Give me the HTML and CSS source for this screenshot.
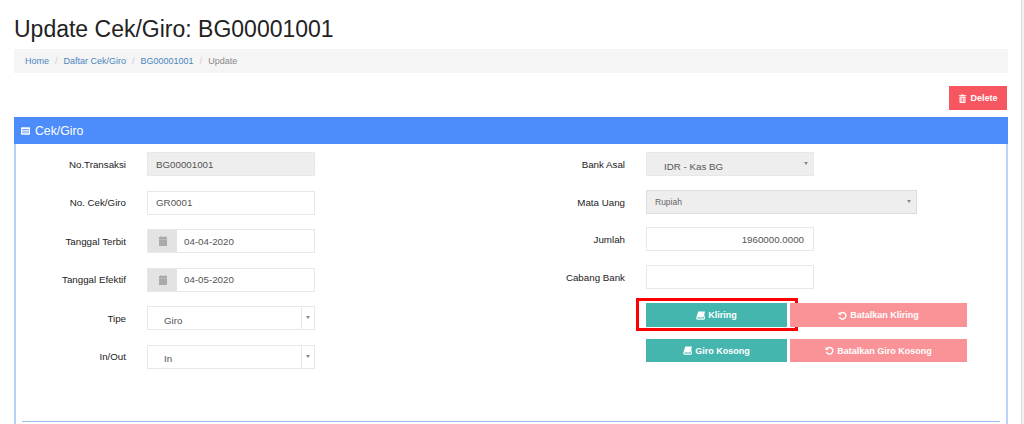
FILE: index.html
```html
<!DOCTYPE html>
<html lang="en">
<head>
    <meta charset="UTF-8">
    <title>Update Cek/Giro</title>
    <link rel="stylesheet" href="styles.css">
</head>
<body>
    <div class="page">
        <h1 class="title">Update Cek/Giro: BG00001001</h1>
        <ul class="breadcrumb">
            <li><a href="#">Home</a></li>
            <li class="sep">/</li>
            <li><a href="#">Daftar Cek/Giro</a></li>
            <li class="sep">/</li>
            <li><a href="#">BG00001001</a></li>
            <li class="sep">/</li>
            <li class="current">Update</li>
        </ul>
        <div class="actions">
            <button class="btn btn-delete">
                <svg class="icon" viewBox="0 0 12 12"><path fill="currentColor" d="M4 1.5 4.6.5h2.8L8 1.5h3v1H1v-1zM2 3.2h8V11a1 1 0 0 1-1 1H3a1 1 0 0 1-1-1zM3.6 4.5v6h.9v-6zm2 0v6h.9v-6zm2 0v6h.9v-6z"/></svg>
                Delete
            </button>
        </div>
        <div class="panel">
            <div class="panel-heading">
                <svg class="icon icon-head" viewBox="0 0 12 10"><path fill="currentColor" d="M1 0h10a1 1 0 0 1 1 1v8a1 1 0 0 1-1 1H1a1 1 0 0 1-1-1V1a1 1 0 0 1 1-1zm.3 2.5v1h9.4v-1zm0 2.2v1h9.4v-1zm0 2.2v1h9.4v-1z"/></svg>
                Cek/Giro
            </div>
            <div class="panel-body">
                <div class="form-col form-left">
                    <div class="row">
                        <label>No.Transaksi</label>
                        <div class="input disabled">BG00001001</div>
                    </div>
                    <div class="row">
                        <label>No. Cek/Giro</label>
                        <div class="input">GR0001</div>
                    </div>
                    <div class="row">
                        <label>Tanggal Terbit</label>
                        <div class="input date">
                            <span class="addon"><svg class="icon-cal" viewBox="0 0 10 10"><path fill="currentColor" d="M1 1h1.5V0h1v1h3V0h1v1H9v9H1z"/><path fill="#c9c9c9" d="M1 3h8v.6H1z"/></svg></span>
                            <span class="date-val">04-04-2020</span>
                        </div>
                    </div>
                    <div class="row">
                        <label>Tanggal Efektif</label>
                        <div class="input date">
                            <span class="addon"><svg class="icon-cal" viewBox="0 0 10 10"><path fill="currentColor" d="M1 1h1.5V0h1v1h3V0h1v1H9v9H1z"/><path fill="#c9c9c9" d="M1 3h8v.6H1z"/></svg></span>
                            <span class="date-val">04-05-2020</span>
                        </div>
                    </div>
                    <div class="row">
                        <label>Tipe</label>
                        <div class="input select2 split">Giro<span class="arrow-box"><i class="caret"></i></span></div>
                    </div>
                    <div class="row">
                        <label>In/Out</label>
                        <div class="input select2 split">In<span class="arrow-box"><i class="caret"></i></span></div>
                    </div>
                </div>
                <div class="form-col form-right">
                    <div class="row">
                        <label>Bank Asal</label>
                        <div class="input select2 disabled">IDR - Kas BG<i class="caret"></i></div>
                    </div>
                    <div class="row">
                        <label>Mata Uang</label>
                        <div class="input wide disabled small">Rupiah<i class="caret"></i></div>
                    </div>
                    <div class="row row-tight">
                        <label>Jumlah</label>
                        <div class="input number">1960000.0000</div>
                    </div>
                    <div class="row">
                        <label>Cabang Bank</label>
                        <div class="input"></div>
                    </div>
                    <div class="btn-row">
                        <button class="btn btn-green btn-one">
                            <svg class="icon" viewBox="0 0 12 11"><path fill="currentColor" d="M3 0h9l-2 8H2.2c-.9 0-.9 1.6 0 1.6h8.2L12 3.5V9l-1 2H2C.6 11 0 10 .3 8.5z"/></svg>
                            Kliring
                            <span class="highlight"></span>
                        </button>
                        <button class="btn btn-pink btn-two">
                            <svg class="icon" viewBox="0 0 12 12"><path fill="none" stroke="currentColor" stroke-width="1.8" d="M3 3.2A4.4 4.4 0 1 1 2 8"/><path fill="currentColor" d="M.6 1v4.4H5z"/></svg>
                            Batalkan Kliring
                        </button>
                    </div>
                    <div class="btn-row btn-row-last">
                        <button class="btn btn-green btn-one">
                            <svg class="icon" viewBox="0 0 12 11"><path fill="currentColor" d="M3 0h9l-2 8H2.2c-.9 0-.9 1.6 0 1.6h8.2L12 3.5V9l-1 2H2C.6 11 0 10 .3 8.5z"/></svg>
                            Giro Kosong
                        </button>
                        <button class="btn btn-pink btn-two">
                            <svg class="icon" viewBox="0 0 12 12"><path fill="none" stroke="currentColor" stroke-width="1.8" d="M3 3.2A4.4 4.4 0 1 1 2 8"/><path fill="currentColor" d="M.6 1v4.4H5z"/></svg>
                            Batalkan Giro Kosong
                        </button>
                    </div>
                </div>
            </div>
            <hr class="divider">
        </div>
    </div>
    <div class="scrollbar"></div>
</body>
</html>
```
FILE: styles.css
```css
html, body {
    height: 424px;
    overflow: hidden;
}
body {
    display: flex;
    justify-content: space-between;
    margin: 0;
    background: #fff;
    font-family: "Liberation Sans", Arial, sans-serif;
    color: #333;
}
.page {
    width: 994px;
    margin-left: 14px;
}
.scrollbar {
    width: 3px;
    height: 424px;
    background: #f1f1f1;
    border-left: 1px solid #dcdcdc;
    box-sizing: border-box;
}
.title {
    margin: 0;
    padding-top: 17px;
    height: 32px;
    font-size: 23px;
    font-weight: normal;
    line-height: 25px;
    color: #222;
}
.breadcrumb {
    display: flex;
    align-items: center;
    gap: 6px;
    height: 24px;
    margin: 0;
    padding: 0 0 0 11px;
    list-style: none;
    background: #f5f5f5;
    font-size: 9px;
}
.breadcrumb a {
    color: #4a86bd;
    text-decoration: none;
}
.breadcrumb .sep {
    color: #ccc;
}
.breadcrumb .current {
    color: #888;
}
.actions {
    display: flex;
    justify-content: flex-end;
    padding: 13px 1px 7px 0;
}
.btn {
    position: relative;
    display: flex;
    align-items: center;
    justify-content: center;
    gap: 3px;
    border: 0;
    padding: 0;
    color: #fff;
    font-family: inherit;
    font-size: 9px;
    font-weight: bold;
}
.btn-delete {
    width: 58px;
    height: 24px;
    background: #f5565f;
}
.icon {
    width: 9px;
    height: 9px;
}
.panel {
    border-left: 2px solid #b5d0fc;
    border-right: 2px solid #bcd4fd;
    height: 310px;
    box-sizing: border-box;
}
.panel-heading {
    display: flex;
    align-items: center;
    gap: 5px;
    height: 27px;
    margin: 0 -2px;
    padding-left: 7px;
    background: #4d8dfb;
    color: #fff;
    font-size: 12.25px;
}
.icon-head {
    width: 9px;
    height: 8px;
}
.panel-body {
    display: flex;
    padding-top: 8px;
    height: 270px;
    box-sizing: border-box;
}
.form-col {
    display: flex;
    flex-direction: column;
    flex: none;
}
.form-left {
    width: 499px;
    gap: 14.5px;
}
.form-right {
    gap: 14px;
}
.row {
    display: flex;
    align-items: center;
}
.row-tight {
    margin-top: -1px;
}
.row label {
    width: 110px;
    padding-right: 21px;
    text-align: right;
    font-size: 9.75px;
    color: #222;
    flex: none;
}
.input {
    position: relative;
    display: flex;
    align-items: center;
    box-sizing: border-box;
    width: 168px;
    height: 24px;
    padding: 0 9px 0 8px;
    border: 1px solid #e8e8e8;
    background: #fff;
    color: #555;
    font-size: 9.75px;
}
.disabled {
    background: #eee;
}
.wide {
    width: 271px;
}
.small {
    font-size: 8.5px;
    border-color: #ddd;
    color: #666;
}
.number {
    justify-content: flex-end;
}
.select2 {
    padding-left: 17px;
    padding-top: 4px;
}
.split {
    padding-left: 16px;
}
.date {
    padding: 0;
}
.addon {
    display: flex;
    align-items: center;
    justify-content: center;
    width: 29px;
    height: 100%;
    background: #e3e3e3;
    flex: none;
}
.icon-cal {
    width: 10px;
    height: 10px;
    color: #aaa;
}
.date-val {
    padding-left: 7px;
}
.caret {
    position: absolute;
    right: 5px;
    top: 9px;
    border-left: 2px solid transparent;
    border-right: 2px solid transparent;
    border-top: 3px solid #888;
}
.arrow-box {
    position: absolute;
    top: 0;
    right: 0;
    bottom: 0;
    width: 12px;
    border-left: 1px solid #e8e8e8;
}
.arrow-box .caret {
    right: 4px;
}
.btn-row {
    display: flex;
    gap: 3px;
    padding-left: 131px;
}
.btn-row-last {
    margin-top: -2px;
}
.btn-row-last .btn {
    height: 23px;
}
.btn-one {
    width: 141px;
    height: 24px;
    background: #45b6ae;
}
.btn-two {
    width: 177px;
    height: 24px;
    background: #fa9398;
}
.highlight {
    position: absolute;
    left: -10px;
    top: -5px;
    width: 162px;
    height: 33px;
    box-sizing: border-box;
    border: 3px solid #f00;
}
.divider {
    height: 1px;
    margin: 7px 6px 0 6px;
    border: 0;
    background: #9cc2fb;
}
```
